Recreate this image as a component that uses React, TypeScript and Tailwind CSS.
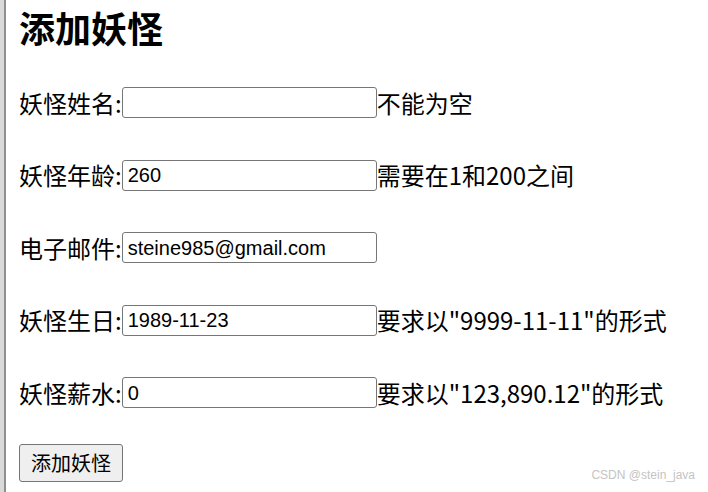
const labelFont = { fontFamily: '"Noto Sans CJK SC", "Noto Sans", sans-serif' };

interface FieldProps {
  label: string;
  value: string;
  hint?: string;
}

function Field({ label, value, hint }: FieldProps) {
  return (
    <div className="flex items-center h-[31px] text-[24px] text-black leading-none">
      <span>{label}:</span>
      <input
        defaultValue={value}
        className="w-[255px] h-[31px] border border-[#767676] rounded-[3px] px-[5px] pt-[1px] text-[20px] text-black bg-white outline-none font-['Liberation_Sans',Arial,sans-serif]"
      />
      {hint && <span>{hint}</span>}
    </div>
  );
}

export default function App() {
  return (
    <div className="relative h-[492px] w-[708px] bg-white overflow-hidden" style={labelFont}>
      <div className="h-full border-l-[4px] border-[#d9d9d9]">
        <div className="h-full border-l-[2px] border-[#8f8f8f] pl-[13px] pt-[9px]">
          {/* Title */}
          <h1 className="text-[36px] font-bold leading-[36px] h-[36px]">添加妖怪</h1>

          {/* Form rows */}
          <div className="mt-[42px] flex flex-col gap-[41.5px]">
            <Field label="妖怪姓名" value="" hint="不能为空" />
            <Field label="妖怪年龄" value="260" hint="需要在1和200之间" />
            <Field label="电子邮件" value="steine985@gmail.com" />
            <Field label="妖怪生日" value="1989-11-23" hint={'要求以"9999-11-11"的形式'} />
            <Field label="妖怪薪水" value="0" hint={'要求以"123,890.12"的形式'} />
          </div>

          <button className="mt-[36px] w-[104px] h-[38px] bg-[#efefef] border border-[#767676] rounded-[3px] text-[20px] text-black leading-none">
            添加妖怪
          </button>
        </div>
      </div>

      {/* Watermark */}
      <span className="absolute right-[13px] bottom-[8px] text-[12px] text-[#c4c4c4] font-['Liberation_Sans',Arial,sans-serif]">
        CSDN @stein_java
      </span>
    </div>
  );
}
